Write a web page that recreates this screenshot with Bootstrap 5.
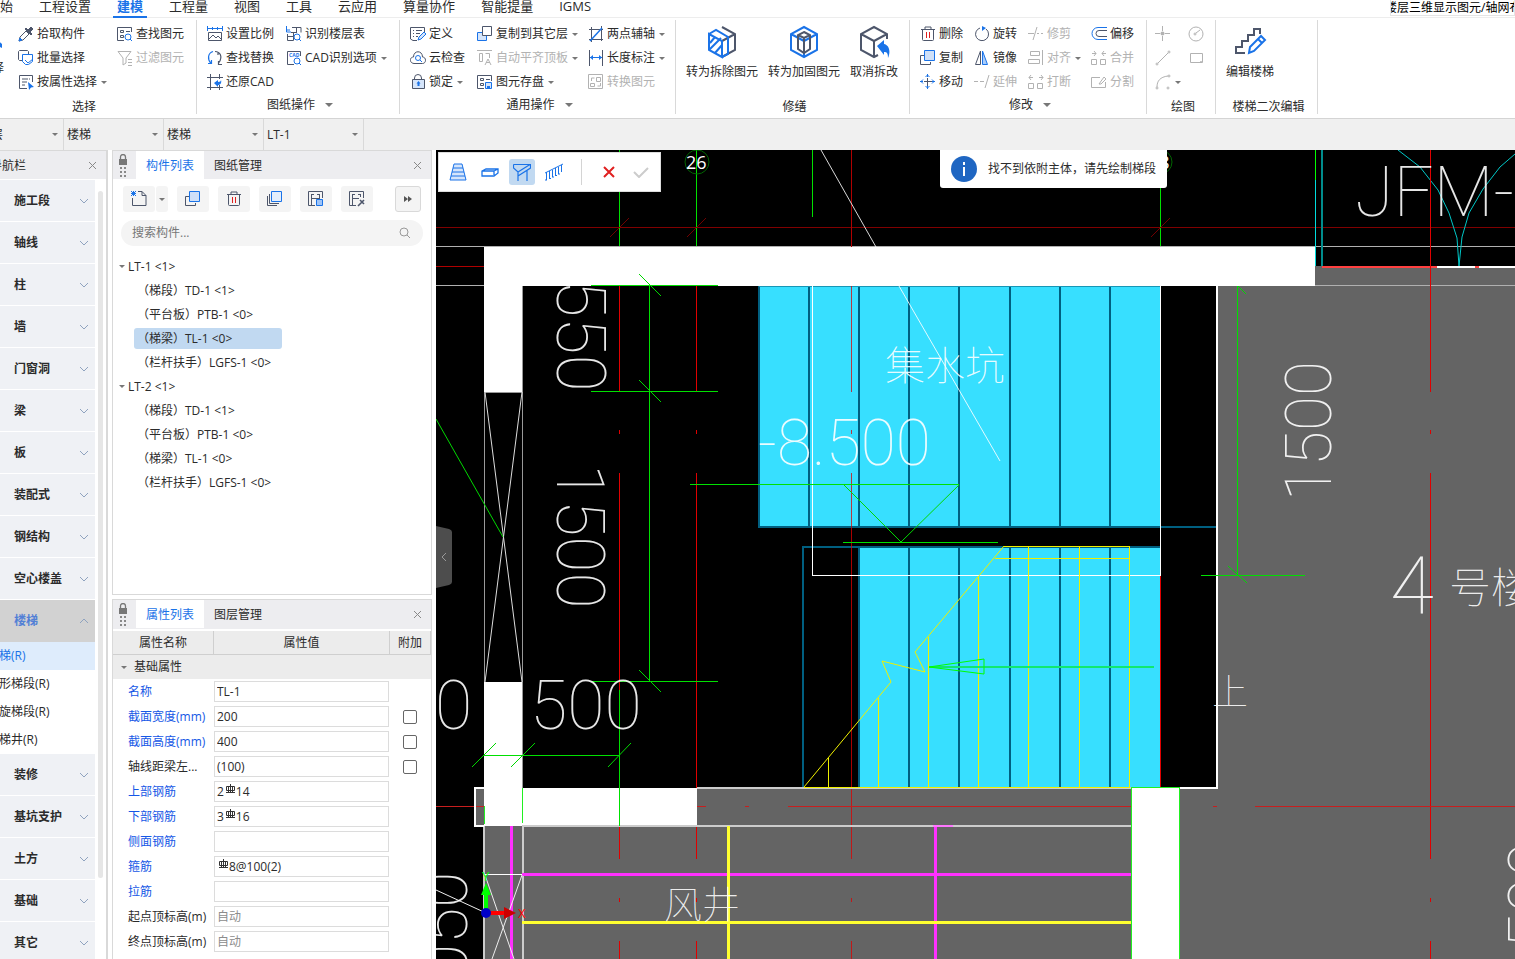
<!DOCTYPE html>
<html lang="zh-CN">
<head>
<meta charset="utf-8">
<meta name="viewport" content="width=device-width, initial-scale=1">
<title>楼梯建模</title>
<link href="https://cdn.jsdelivr.net/npm/bootstrap@5.3.0/dist/css/bootstrap.min.css" rel="stylesheet">
<style>
:root{--ink:#2b2b2b;--blue:#1a73e8;--slate:#4d566b;--mute:#b2b2b2;--rule:#d9d9d9;--bar:#f0f0f0}
body{font-family:"Open Sans","Noto Sans CJK SC",sans-serif;font-size:12px;line-height:16px;color:var(--ink);background:#fff}
button,select,input{font:inherit;color:inherit}
button{background:none;border:0;padding:0;white-space:nowrap}
a{color:inherit;text-decoration:none}
svg{flex:none;fill:none}
.menubar{height:18px;border-bottom:1px solid #ededed}
.menubar .nav-link{position:relative;font-size:13px;line-height:16px;height:18px;padding:0 4px;color:var(--ink);white-space:nowrap;margin-top:-2px}
.menubar .nav-link.active{color:var(--blue);font-weight:700;border-bottom:2px solid var(--blue);height:20px}
.menubar .tabs{gap:18px;margin-left:-17px}
.tipbox{width:125px;height:16px;border:1px solid #e4e4e4;border-top:0;color:#000;white-space:nowrap;overflow:hidden}
.tipbox span{margin-left:-6px;line-height:15px}
.ribbon{height:101px;border-bottom:1px solid #d4d4d4;padding-top:2px}
.rgroup{position:relative;border-right:1px solid var(--rule);height:94px;flex:none}
.rgroup .cols{height:75px;padding-top:2px;padding-left:10px}
.rgroup .title{height:20px;line-height:16px;display:flex;justify-content:center;align-items:center;gap:9px;padding-left:4px}
.rgroup .title.low{padding-top:3px}
.w-g1 .title{padding-right:32px}
.w-g1 .cols{padding-left:0}
.w-g6 .cols{padding-left:8px}
.rcol{display:flex;flex-direction:column;align-items:flex-start;flex:none}
.w-18c{width:99px;margin-left:14px}.w-79{width:79px}.w-67{width:67px}.w-111{width:111px}.w-54{width:54px}.w-63{width:63px}.w-33{width:33px}
.rbtn{height:24px;display:flex;align-items:center;gap:3px}
.rbtn.off{color:var(--mute)}
.caret{width:0;height:0;border:3px solid transparent;border-top-color:#777;border-bottom:0;flex:none;margin-left:1px}
.caret.big{border-width:4px;border-bottom:0}
.bigbtn{display:flex;flex-direction:column;align-items:center;gap:5px;padding-top:3px;line-height:16px}
.bigrow{gap:10px}
.pickbtn{width:24px;margin-left:-20px}
.w-g1{width:197px}.w-g2{width:203px}.w-g3{width:276px}.w-g4{width:234px}.w-g5{width:237px}.w-g6{width:69px}.w-g7{width:102px}
.combobar{background:var(--bar);overflow:hidden}
.combos{height:31px;margin-left:-36px}
.combo{position:relative;width:100px;border-right:1px solid var(--rule)}
.combo select{appearance:none;width:100%;height:31px;border:0;background:none;padding:0 0 0 3px;outline:0}
.combo .caret{position:absolute;right:5px;top:14px;pointer-events:none}
.side{width:108px;border-right:2px solid var(--rule);border-top:1px solid var(--rule);overflow:hidden}
.side nav{padding-top:1px}
.phead{height:28px;background:#ededf0;flex:none}
.side .phead{padding:1px 9px 0 0}
.side .phead span{margin-left:-10px}
.navrow{display:flex;width:95px;height:41px;margin-bottom:1px;background:#eff1f5;align-items:center;justify-content:space-between;padding:0 6px 0 14px;font-weight:700}
.navrow.active{background:#d2d2d2;color:#5380d6;margin-bottom:0;height:42px}
.subrow{display:block;width:95px;height:28px;line-height:28px;white-space:nowrap}
.subrow span{margin-left:-13px}
.subrow.active{background:#deecfc;color:var(--blue)}
.thumb{width:5px;height:687px;border-radius:3px;background:#e6e6e6;margin:12px 0 0 3px}
.panel{border:1px solid var(--rule);background:#fff}
.parts{flex:0 0 445px}
.dock{width:320px}
.grip{margin:3px 8px 0 5px}
.phead .shut{margin-left:auto;padding-right:9px}
.ptab{width:68px;height:28px;line-height:29px;text-align:center}
.ptab.active{background:#fff;color:var(--blue)}
.tools{gap:9px;padding:7px 10px 0}
.pair{gap:1px}
.tbtn{width:32px;height:26px;background:#f4f4f4;border-radius:3px;display:flex;align-items:center;justify-content:center}
.tbtn.slim{width:12px}
.tbtn.more{width:26px;border:1px solid var(--rule)}
.search{height:26px;border-radius:13px;background:#f4f4f4;padding:0 12px 0 11px}
.search input{border:0;background:none;outline:0;min-width:0}
.search input::placeholder{color:#777}
.tree{padding-top:2px}
.tree button{display:flex;align-items:center;height:21px;margin-bottom:3px}
.tree .root{gap:3px;margin-left:5px}
.tree .leaf{margin-left:21px;width:148px;padding-left:3px;border-radius:3px}
.tree .leaf.active{background:#c1d9f1}
.attrs .phead{margin-bottom:2px;height:29px}
.props{width:100%;table-layout:fixed;border-collapse:separate;border-spacing:0}
.c-name{width:101px}.c-val{width:176px}
.props th{height:24px;font-weight:400;text-align:center;background:#ececec;border-right:1px solid #cfcfcf;border-bottom:1px solid #cfcfcf;padding:0}
.props td{height:25px;padding:0}
.props .sect td{height:24px;background:#ececec;padding-left:8px}
.props .sect span{gap:7px}
.props label{padding-left:15px;white-space:nowrap}
.props .vary label{color:#1557e6}
.props .txt{display:block;width:100%;height:21px;border:1px solid #dcdcdc;padding:0 2px;outline:0;background:#fff}
.props .txt::placeholder{color:#8c8c8c}
.props input[type=checkbox]{appearance:none;width:14px;height:14px;border:1px solid #666;border-radius:2px;margin:0 0 0 13px;display:block}
.props .cell{position:relative;padding-right:1px}
.cell svg{position:absolute;top:5px}
.cell .r1{left:11px}.cell .r0{left:4px}
.canvas{position:relative;background:#000;overflow:hidden;min-width:0}
.canvas>svg{position:absolute;left:0;top:0}
.crisp{shape-rendering:crispEdges}
.cad{font-family:Roboto,"Noto Sans CJK SC",sans-serif;font-weight:100;fill:#fff;fill-opacity:.9}
.cjk{font-family:"Noto Sans CJK SC",sans-serif}
.float{position:absolute;left:2px;top:2px;background:#fff;border:1px solid #ddd;height:40px;width:223px;padding:0 6px}
.float button{width:26px;height:26px;margin-right:6px;border-radius:3px;display:flex;align-items:center;justify-content:center}
.float button.active{background:#c1d9f1}
.float hr{width:1px;height:26px;background:#d4d4d4;opacity:1;border:0;margin:0 14px 0 8px}
.notice{position:absolute;left:504px;top:0;height:38px;width:227px;background:#fff;border-radius:0 0 3px 3px;padding:0 11px;gap:11px;white-space:nowrap}
.handle{position:absolute;left:0;top:376px}
</style>
</head>
<body class="vh-100 d-flex flex-column overflow-hidden">

<svg width="0" height="0" class="position-absolute" aria-hidden="true">
<defs>
<symbol id="chev" viewBox="0 0 10 6"><path d="M1 1l4 4 4-4" stroke="#8fa3bf"/></symbol>
<symbol id="chevu" viewBox="0 0 10 6"><path d="M1 5l4-4 4 4" stroke="#8fa3bf"/></symbol>
<symbol id="close" viewBox="0 0 9 9"><path d="M1 1l7 7M8 1l-7 7" stroke="#888"/></symbol>
<symbol id="lock-s" viewBox="0 0 10 24"><path d="M2.500 5V3a2.500 2.500 0 0 1 5 0v2" stroke="#777" stroke-width="1.300"/><path d="M1 5h8v6H1z" fill="#777"/><path d="M2 13h2v2H2zM6 13h2v2H6zM2 17h2v2H2zM6 17h2v2H6zM2 21h2v2H2zM6 21h2v2H6z" fill="#888"/></symbol>
<symbol id="drop" viewBox="0 0 16 16"><path d="M1 15l1-4 6-6 3 3-6 6z" stroke="#4d566b"/><path d="M1 15l1-3 2 2z" fill="#1a73e8" stroke="#1a73e8"/><path d="M7 3l6 6 1-1-2-2 3-3-2-2-3 3-2-2z" fill="#4d566b" stroke="#4d566b"/></symbol>
<symbol id="batch" viewBox="0 0 16 16"><path d="M4 10.500H1.500l-1-1v-8l1-1h8l1 1V4" stroke="#4d566b"/><path d="M4.500 4.500h10v7l-4 3h-3l-3-3z" stroke="#1a73e8"/><path d="M7 10l3 3 5-4" stroke="#1a73e8"/></symbol>
<symbol id="attr" viewBox="0 0 16 16"><path d="M9 14.500H1.500v-13h13V8M4 5h6M4 8h5M4 11h3M11 5h1" stroke="#4d566b"/><path d="M10 8l6 5-3 .5L11 16z" fill="#1a73e8"/></symbol>
<symbol id="find" viewBox="0 0 16 16"><path d="M7 14.500H.5v-13h14V6M3.500 4.500h3v2h-3zM3.500 9.500h3v2h-3zM9 5.500h4" stroke="#4d566b"/><circle cx="11" cy="11" r="3" stroke="#1a73e8"/><path d="M13 13l2 2" stroke="#1a73e8"/></symbol>
<symbol id="filter" viewBox="0 0 16 16"><path d="M1 1.500h13L9 8v5l-3 2V8zM11 9.500h4M11 12.500h4M11 15.500h4" stroke="#b2b2b2"/></symbol>
<symbol id="scale" viewBox="0 0 16 16"><path d="M1 2.500h14M.5 0v5M15.500 0v5M5.500 1v3M10.500 1v3" stroke="#1a73e8"/><path d="M1.500 6.500h13v8h-13zM2 13l4-4 3 3 2-2 3 3" stroke="#4d566b"/></symbol>
<symbol id="swap" viewBox="0 0 16 16"><path d="M6 1.500C1 3 0 9 4 13.500M1 13.500h3.500V10" stroke="#1a73e8" stroke-width="1.200"/><path d="M8 1.500c5 0 8 5 4 11M15 14.500h-3.500V11M11 2v3" stroke="#4d566b" stroke-width="1.200"/></symbol>
<symbol id="restore" viewBox="0 0 16 16"><path d="M3.500 0v16M0 3.500h16M0 13.500h16M12.500 0v5M12.500 11v5" stroke="#4d566b"/><path d="M7 9l4-3v2c2 0 3-1 3-2 1 3-1 5-3 5v2z" fill="#1a73e8"/></symbol>
<symbol id="floor" viewBox="0 0 16 16"><path d="M.5 0v6H5M.5 4H4" stroke="#1a73e8"/><path d="M6 1.500h9v5M10.500 1v6M5 6.500h5M1.500 8v6.500h6V6M2 10.500h6" stroke="#4d566b"/><circle cx="11" cy="11" r="3" stroke="#1a73e8"/><path d="M13 13l2 2" stroke="#1a73e8"/></symbol>
<symbol id="cadopt" viewBox="0 0 16 16"><path d="M8 14.500H1.500v-13h13V6" stroke="#4d566b"/><text x="3" y="7" font-size="5" font-weight="700" fill="#1a73e8">CAD</text><circle cx="11" cy="11" r="3" stroke="#1a73e8"/><path d="M13 13l2 2" stroke="#1a73e8"/></symbol>
<symbol id="define" viewBox="0 0 16 16"><path d="M7 14.500H3L.5 13V1.500h14V6M3 4.500h1M6 4.500h6M3 7.500h1M6 7.500h4M3 10.500h1M6 10.500h2" stroke="#4d566b"/><path d="M8 14l1-3 5-5 2 2-5 5z" fill="#d5e5fb" stroke="#1a73e8"/></symbol>
<symbol id="cloud" viewBox="0 0 16 16"><path d="M4 13.500C-1 13-.5 7 3.500 7 3.500 0 12.500 0 12.500 7c4 0 4 6.500 0 6.500z" stroke="#4d566b"/><circle cx="8" cy="8" r="2.500" stroke="#1a73e8"/><path d="M10 10l2 2" stroke="#1a73e8"/></symbol>
<symbol id="lock" viewBox="0 0 16 16"><path d="M4.500 6V4a3.500 3.500 0 0 1 7 0v2" stroke="#4d566b"/><path d="M2.500 5.500h12v9h-12z" fill="#d5e5fb" stroke="#4d566b"/><path d="M8.500 7l2 2.500h-1V12h-2V9.500h-1z" fill="#1a73e8"/></symbol>
<symbol id="layers" viewBox="0 0 16 16"><path d="M.5 6.500h9v8h-9z" fill="#d5e5fb" stroke="#1a73e8"/><path d="M5.500 .5h9v9h-9z" fill="#fff" stroke="#4d566b"/></symbol>
<symbol id="align-top" viewBox="0 0 16 16"><path d="M0 .5h15M2.500 3.500h3v8h-3zM8.500 3.500h4V8M8 15l3-6 3 6M9 12.500h4" stroke="#b2b2b2"/></symbol>
<symbol id="store" viewBox="0 0 16 16"><path d="M7 14.500H.5v-13h14V7M3.500 4.500h3v2h-3zM3.500 9.500h3v2h-3zM9 5.500h4" stroke="#4d566b"/><path d="M8.500 8.500h6v6h-6z" fill="#d5e5fb" stroke="#1a73e8"/><path d="M10 12h3v3h-3z" fill="#1a73e8"/></symbol>
<symbol id="axis2" viewBox="0 0 16 16"><path d="M3.500 1v15M13.500 0v15M1 3.500h14M1 13.500h14" stroke="#4d566b"/><path d="M2 15L14 2" stroke="#1a73e8" stroke-width="1.500"/></symbol>
<symbol id="length" viewBox="0 0 16 16"><path d="M1.500 0v16M14.500 0v16" stroke="#4d566b"/><path d="M2 7.500h12" stroke="#1a73e8"/><path d="M2 7.500L5 5v5zM14 7.500L11 5v5z" fill="#1a73e8"/></symbol>
<symbol id="convert" viewBox="0 0 16 16"><path d="M.5 .5h14v14H.5zM8.500 3.500h4v4h-4zM2.500 9.500h4v3h-4zM3.500 7V4h3M12.500 9v3h-3" stroke="#b2b2b2"/></symbol>
<symbol id="cube1" viewBox="0 0 32 34"><path d="M16 2l13 7v16l-13 7M16 16l13-7" stroke="#4d566b" stroke-width="2"/><path d="M16 32L3 25V9l13 7zM3 9l7-4 12 7v17l-6 3M4 18l5-6M4 24l11-11M9 28l7-8" stroke="#1a73e8" stroke-width="2"/></symbol>
<symbol id="cube2" viewBox="0 0 32 34"><path d="M16 2l13 7v16l-13 7-13-7V9zM3 9l13 7 13-7M16 16v16" stroke="#1a73e8" stroke-width="2"/><path d="M16 7l6 3v14l-6 4-6-4V10zM10 10l6 3 6-3M16 13v15" stroke="#4d566b" stroke-width="2"/></symbol>
<symbol id="cube3" viewBox="0 0 32 34"><path d="M29 14V9L16 2 3 9v16l13 7 4-2M3 9l13 7 13-7M16 16v16" stroke="#4d566b" stroke-width="2"/><path d="M19 21l7-6v4c5 1 7 7 4 14 0-5-1-6-4-6v3z" fill="#1a73e8"/></symbol>
<symbol id="trash" viewBox="0 0 16 16"><path d="M1 3.500h14M5 3V1h6v2M2.500 4v9.500a1 1 0 0 0 1 1h9a1 1 0 0 0 1-1V4" stroke="#4d566b"/><path d="M6.500 6v6M9.500 6v6" stroke="#e02020"/></symbol>
<symbol id="copy" viewBox="0 0 16 16"><path d="M4 5.500H.5v9h10V12" stroke="#4d566b"/><path d="M4.500 .5h10v10h-10z" fill="#cfe0f8" stroke="#1a73e8"/></symbol>
<symbol id="move" viewBox="0 0 16 16"><path d="M7.500 4v8M4 7.500h8" stroke="#4d566b"/><path d="M7.500 0v3M7.500 12v3M0 7.500h3M12 7.500h3M5.500 3l2-2 2 2M5.500 12l2 2 2-2M3 5.500l-2 2 2 2M12 5.500l2 2-2 2" stroke="#1a73e8"/></symbol>
<symbol id="rotate" viewBox="0 0 16 16"><path d="M6 2a6.500 6.500 0 1 0 6 1" stroke="#4d566b"/><path d="M8 0l4 2-4 3z" fill="#1a73e8"/></symbol>
<symbol id="mirror" viewBox="0 0 16 16"><path d="M6.500 1v13.500H1.500z" stroke="#4d566b"/><path d="M8.500 1v13.500h5z" fill="#a9ccfa" stroke="#1a73e8"/></symbol>
<symbol id="extend" viewBox="0 0 16 16"><path d="M0 7.500h4M6 7.500h4M11 14l4-13" stroke="#b2b2b2"/></symbol>
<symbol id="trim" viewBox="0 0 16 16"><path d="M0 7.500h6M5 14l4-13M9 7.500h2M13 7.500h2" stroke="#b2b2b2"/></symbol>
<symbol id="alignr" viewBox="0 0 16 16"><path d="M2.500 1.500h9v4h-9zM.5 9.500h11v4H.5zM14.500 0v15" stroke="#b2b2b2"/></symbol>
<symbol id="brk" viewBox="0 0 16 16"><path d="M.5 9.500h5v5h-5zM9.500 9.500h5v5h-5zM1 3.500h4M3 1L1 3.500 3 6M15 3.500h-4M13 1l2 2.500L13 6" stroke="#b2b2b2"/></symbol>
<symbol id="offset" viewBox="0 0 16 16"><path d="M16 1.500H7a6 6 0 0 0 0 12h9" stroke="#1a73e8"/><path d="M16 4.500H8a3 3 0 0 0 0 6h8" stroke="#4d566b"/></symbol>
<symbol id="merge" viewBox="0 0 16 16"><path d="M.5 9.500h5v5h-5zM9.500 9.500h5v5h-5zM1 3.500h4M3 1l2 2.500L3 6M15 3.500h-4M13 1l-2 2.500L13 6" stroke="#b2b2b2"/></symbol>
<symbol id="split" viewBox="0 0 16 16"><path d="M9 3.500H.5v10h14V8M8 10l5-7 2 2-5 5z" stroke="#b2b2b2"/></symbol>
<symbol id="pt" viewBox="0 0 16 16"><path d="M7.500 0v5M7.500 10v5M0 7.500h5M10 7.500h5" stroke="#b2b2b2"/><circle cx="7.500" cy="7.500" r="2" fill="#b2b2b2"/></symbol>
<symbol id="circ" viewBox="0 0 16 16"><circle cx="8" cy="8" r="7" stroke="#b2b2b2"/><circle cx="7" cy="8" r="1" stroke="#b2b2b2"/><path d="M8 7l4-3" stroke="#b2b2b2"/></symbol>
<symbol id="seg" viewBox="0 0 16 16"><path d="M3 13L13 3" stroke="#b2b2b2"/><circle cx="2" cy="14" r="1" stroke="#b2b2b2"/><circle cx="14" cy="2" r="1" stroke="#b2b2b2"/></symbol>
<symbol id="rct" viewBox="0 0 16 16"><path d="M2.500 3.500h12v9h-12z" stroke="#b2b2b2"/><circle cx="13" cy="12" r="1" fill="#b2b2b2"/></symbol>
<symbol id="arc" viewBox="0 0 16 16"><path d="M2 13c0-6 3-10 11-11" stroke="#b2b2b2"/><circle cx="2" cy="14" r="1" stroke="#b2b2b2"/><circle cx="13" cy="14" r="1" stroke="#b2b2b2"/><circle cx="14" cy="2" r="1" stroke="#b2b2b2"/></symbol>
<symbol id="stair" viewBox="0 0 34 30"><path d="M12 27H3v-6h6v-6h6V9h6V3h6v5" stroke="#4d566b" stroke-width="2"/><path d="M16 27l1-6 11-11 4 4-11 11zM25 13l4 4" stroke="#1a73e8" stroke-width="2"/></symbol>
<symbol id="newc" viewBox="0 0 16 16"><path d="M7 .5h4l4 4v10H1.500V7M11 .5v4h4" stroke="#4d566b"/><path d="M0 0l5 5M5 0L0 5M2.500 0v5M0 2.500h5" stroke="#1a73e8"/></symbol>
<symbol id="stack" viewBox="0 0 16 16"><path d="M4.500 .5h10v10h-10z" fill="#e3eefc" stroke="#1a73e8"/><path d="M2.500 3v9.500H12M.5 5v9.500H10" stroke="#4d566b"/></symbol>
<symbol id="save-h" viewBox="0 0 16 16"><path d="M7 14.500H.5V.5h14V7M3.500 3v12M4 7.500h8M11.500 3v5M3.500 3.500H6M9 3.500h3" stroke="#4d566b"/><path d="M8.500 8.500h6v6h-6z" fill="#9fc4f7" stroke="#1a73e8"/></symbol>
<symbol id="pick-h" viewBox="0 0 16 16"><path d="M7 14.500H.5V.5h14V7M3.500 3v12M4 7.500h6M11.500 3v3M3.500 3.500H6M9 3.500h3" stroke="#4d566b"/><path d="M9 15l4-4M11 9l4 4M13 11l2-2" stroke="#4d566b" stroke-width="1.600"/></symbol>
<symbol id="mag" viewBox="0 0 12 12"><circle cx="5" cy="5" r="4" stroke="#999"/><path d="M8 8l3 3" stroke="#999"/></symbol>
<symbol id="rebar" viewBox="0 0 11 10"><path d="M5.500 0v9M1.500 6.500v-4h8v4h-8M3.500 3v6M7.500 3v6M1 8.500h9" stroke="#333"/></symbol>
</defs>
</svg>

<header>
  <nav class="menubar d-flex justify-content-between">
    <div class="tabs nav flex-nowrap">
      <a class="nav-link" href="#">开始</a><a class="nav-link" href="#">工程设置</a><a class="nav-link active" href="#">建模</a><a class="nav-link" href="#">工程量</a><a class="nav-link" href="#">视图</a><a class="nav-link" href="#">工具</a><a class="nav-link" href="#">云应用</a><a class="nav-link" href="#">算量协作</a><a class="nav-link" href="#">智能提量</a><a class="nav-link" href="#">IGMS</a>
    </div>
    <div class="tipbox"><span>楼层三维显示图元/轴网布置</span></div>
  </nav>

  <div class="ribbon d-flex">
    <section class="rgroup w-g1">
      <div class="cols d-flex">
        <button class="bigbtn pickbtn"><svg width="24" height="30" viewBox="0 0 24 30"><path d="M14 12l8 7v4l-8-4z" fill="#1a73e8"/></svg><span>选择</span></button>
        <div class="rcol w-18c">
          <button class="rbtn"><svg width="16" height="16"><use href="#drop"/></svg>拾取构件</button>
          <button class="rbtn"><svg width="16" height="16"><use href="#batch"/></svg>批量选择</button>
          <button class="rbtn"><svg width="16" height="16"><use href="#attr"/></svg>按属性选择<i class="caret"></i></button>
        </div>
        <div class="rcol">
          <button class="rbtn"><svg width="16" height="16"><use href="#find"/></svg>查找图元</button>
          <button class="rbtn off"><svg width="16" height="16"><use href="#filter"/></svg>过滤图元</button>
        </div>
      </div>
      <div class="title low">选择</div>
    </section>
    <section class="rgroup w-g2">
      <div class="cols d-flex">
        <div class="rcol w-79">
          <button class="rbtn"><svg width="16" height="16"><use href="#scale"/></svg>设置比例</button>
          <button class="rbtn"><svg width="16" height="16"><use href="#swap"/></svg>查找替换</button>
          <button class="rbtn"><svg width="16" height="16"><use href="#restore"/></svg>还原CAD</button>
        </div>
        <div class="rcol">
          <button class="rbtn"><svg width="16" height="16"><use href="#floor"/></svg>识别楼层表</button>
          <button class="rbtn"><svg width="16" height="16"><use href="#cadopt"/></svg>CAD识别选项<i class="caret"></i></button>
        </div>
      </div>
      <div class="title">图纸操作<i class="caret big"></i></div>
    </section>
    <section class="rgroup w-g3">
      <div class="cols d-flex">
        <div class="rcol w-67">
          <button class="rbtn"><svg width="16" height="16"><use href="#define"/></svg>定义</button>
          <button class="rbtn"><svg width="16" height="16"><use href="#cloud"/></svg>云检查</button>
          <button class="rbtn"><svg width="16" height="16"><use href="#lock"/></svg>锁定<i class="caret"></i></button>
        </div>
        <div class="rcol w-111">
          <button class="rbtn"><svg width="16" height="16"><use href="#layers"/></svg>复制到其它层<i class="caret"></i></button>
          <button class="rbtn off"><svg width="16" height="16"><use href="#align-top"/></svg>自动平齐顶板<i class="caret"></i></button>
          <button class="rbtn"><svg width="16" height="16"><use href="#store"/></svg>图元存盘<i class="caret"></i></button>
        </div>
        <div class="rcol">
          <button class="rbtn"><svg width="16" height="16"><use href="#axis2"/></svg>两点辅轴<i class="caret"></i></button>
          <button class="rbtn"><svg width="16" height="16"><use href="#length"/></svg>长度标注<i class="caret"></i></button>
          <button class="rbtn off"><svg width="16" height="16"><use href="#convert"/></svg>转换图元</button>
        </div>
      </div>
      <div class="title">通用操作<i class="caret big"></i></div>
    </section>
    <section class="rgroup w-g4">
      <div class="cols bigrow d-flex align-items-start">
        <button class="bigbtn"><svg width="32" height="34"><use href="#cube1"/></svg>转为拆除图元</button>
        <button class="bigbtn"><svg width="32" height="34"><use href="#cube2"/></svg>转为加固图元</button>
        <button class="bigbtn"><svg width="32" height="34"><use href="#cube3"/></svg>取消拆改</button>
      </div>
      <div class="title low">修缮</div>
    </section>
    <section class="rgroup w-g5">
      <div class="cols d-flex">
        <div class="rcol w-54">
          <button class="rbtn"><svg width="16" height="16"><use href="#trash"/></svg>删除</button>
          <button class="rbtn"><svg width="16" height="16"><use href="#copy"/></svg>复制</button>
          <button class="rbtn"><svg width="16" height="16"><use href="#move"/></svg>移动</button>
        </div>
        <div class="rcol w-54">
          <button class="rbtn"><svg width="16" height="16"><use href="#rotate"/></svg>旋转</button>
          <button class="rbtn"><svg width="16" height="16"><use href="#mirror"/></svg>镜像</button>
          <button class="rbtn off"><svg width="16" height="16"><use href="#extend"/></svg>延伸</button>
        </div>
        <div class="rcol w-63">
          <button class="rbtn off"><svg width="16" height="16"><use href="#trim"/></svg>修剪</button>
          <button class="rbtn off"><svg width="16" height="16"><use href="#alignr"/></svg>对齐<i class="caret"></i></button>
          <button class="rbtn off"><svg width="16" height="16"><use href="#brk"/></svg>打断</button>
        </div>
        <div class="rcol">
          <button class="rbtn"><svg width="16" height="16"><use href="#offset"/></svg>偏移</button>
          <button class="rbtn off"><svg width="16" height="16"><use href="#merge"/></svg>合并</button>
          <button class="rbtn off"><svg width="16" height="16"><use href="#split"/></svg>分割</button>
        </div>
      </div>
      <div class="title">修改<i class="caret big"></i></div>
    </section>
    <section class="rgroup w-g6">
      <div class="cols d-flex">
        <div class="rcol w-33">
          <button class="rbtn" aria-label="点"><svg width="16" height="16"><use href="#pt"/></svg></button>
          <button class="rbtn" aria-label="直线"><svg width="16" height="16"><use href="#seg"/></svg></button>
          <button class="rbtn off" aria-label="弧线"><svg width="16" height="16"><use href="#arc"/></svg><i class="caret"></i></button>
        </div>
        <div class="rcol">
          <button class="rbtn" aria-label="圆"><svg width="16" height="16"><use href="#circ"/></svg></button>
          <button class="rbtn" aria-label="矩形"><svg width="16" height="16"><use href="#rct"/></svg></button>
        </div>
      </div>
      <div class="title low">绘图</div>
    </section>
    <section class="rgroup w-g7">
      <div class="cols d-flex align-items-start">
        <button class="bigbtn"><svg width="34" height="34" viewBox="0 0 34 34"><use href="#stair" width="34" height="30" y="1"/></svg>编辑楼梯</button>
      </div>
      <div class="title low">楼梯二次编辑</div>
    </section>
  </div>

  <div class="combobar">
    <div class="combos d-flex">
      <div class="combo"><select aria-label="楼层"><option>基础层</option></select><i class="caret"></i></div>
      <div class="combo"><select aria-label="构件大类"><option>楼梯</option></select><i class="caret"></i></div>
      <div class="combo"><select aria-label="构件类型"><option>楼梯</option></select><i class="caret"></i></div>
      <div class="combo"><select aria-label="构件"><option>LT-1</option></select><i class="caret"></i></div>
    </div>
  </div>
</header>

<main class="d-flex flex-grow-1 overflow-hidden">
  <aside class="side flex-shrink-0">
    <div class="phead d-flex align-items-center justify-content-between"><span>导航栏</span><button aria-label="关闭" class="d-flex"><svg width="9" height="9"><use href="#close"/></svg></button></div>
    <div class="d-flex">
      <nav>
        <button class="navrow">施工段<svg width="10" height="6"><use href="#chev"/></svg></button>
        <button class="navrow">轴线<svg width="10" height="6"><use href="#chev"/></svg></button>
        <button class="navrow">柱<svg width="10" height="6"><use href="#chev"/></svg></button>
        <button class="navrow">墙<svg width="10" height="6"><use href="#chev"/></svg></button>
        <button class="navrow">门窗洞<svg width="10" height="6"><use href="#chev"/></svg></button>
        <button class="navrow">梁<svg width="10" height="6"><use href="#chev"/></svg></button>
        <button class="navrow">板<svg width="10" height="6"><use href="#chev"/></svg></button>
        <button class="navrow">装配式<svg width="10" height="6"><use href="#chev"/></svg></button>
        <button class="navrow">钢结构<svg width="10" height="6"><use href="#chev"/></svg></button>
        <button class="navrow">空心楼盖<svg width="10" height="6"><use href="#chev"/></svg></button>
        <button class="navrow active">楼梯<svg width="10" height="6"><use href="#chevu"/></svg></button>
        <a class="subrow active" href="#"><span>楼梯(R)</span></a>
        <a class="subrow" href="#"><span>矩形梯段(R)</span></a>
        <a class="subrow" href="#"><span>螺旋梯段(R)</span></a>
        <a class="subrow" href="#"><span>楼梯井(R)</span></a>
        <button class="navrow">装修<svg width="10" height="6"><use href="#chev"/></svg></button>
        <button class="navrow">基坑支护<svg width="10" height="6"><use href="#chev"/></svg></button>
        <button class="navrow">土方<svg width="10" height="6"><use href="#chev"/></svg></button>
        <button class="navrow">基础<svg width="10" height="6"><use href="#chev"/></svg></button>
        <button class="navrow">其它<svg width="10" height="6"><use href="#chev"/></svg></button>
      </nav>
      <div class="thumb"></div>
    </div>
  </aside>

  <div class="dock d-flex flex-column flex-shrink-0 ms-1 me-1">
    <section class="panel parts">
      <div class="phead d-flex">
        <svg width="10" height="24" class="grip"><use href="#lock-s"/></svg>
        <button class="ptab active">构件列表</button><button class="ptab">图纸管理</button>
        <button aria-label="关闭" class="shut d-flex align-items-center"><svg width="9" height="9"><use href="#close"/></svg></button>
      </div>
      <div class="tools d-flex">
        <div class="pair d-flex"><button class="tbtn" aria-label="新建"><svg width="16" height="16"><use href="#newc"/></svg></button><button class="tbtn slim" aria-label="更多新建"><i class="caret m-0"></i></button></div>
        <button class="tbtn" aria-label="复制"><svg width="16" height="16"><use href="#copy"/></svg></button>
        <button class="tbtn" aria-label="删除"><svg width="16" height="16"><use href="#trash"/></svg></button>
        <button class="tbtn" aria-label="层间复制"><svg width="16" height="16"><use href="#stack"/></svg></button>
        <button class="tbtn" aria-label="存盘"><svg width="16" height="16"><use href="#save-h"/></svg></button>
        <button class="tbtn" aria-label="提取"><svg width="16" height="16"><use href="#pick-h"/></svg></button>
        <button class="tbtn more ms-auto" aria-label="更多"><svg width="8" height="6" viewBox="0 0 8 6"><path d="M0 0l4 3-4 3zM4 0l4 3-4 3z" fill="#555"/></svg></button>
      </div>
      <div class="search d-flex align-items-center mx-2 my-2"><input class="flex-grow-1 p-0" type="search" aria-label="搜索构件" placeholder="搜索构件..."><svg width="12" height="12"><use href="#mag"/></svg></div>
      <div class="tree">
        <button class="root"><i class="caret"></i>LT-1 &lt;1&gt;</button>
        <button class="leaf">（梯段）TD-1 &lt;1&gt;</button>
        <button class="leaf">（平台板）PTB-1 &lt;0&gt;</button>
        <button class="leaf active">（梯梁）TL-1 &lt;0&gt;</button>
        <button class="leaf">（栏杆扶手）LGFS-1 &lt;0&gt;</button>
        <button class="root"><i class="caret"></i>LT-2 &lt;1&gt;</button>
        <button class="leaf">（梯段）TD-1 &lt;1&gt;</button>
        <button class="leaf">（平台板）PTB-1 &lt;0&gt;</button>
        <button class="leaf">（梯梁）TL-1 &lt;0&gt;</button>
        <button class="leaf">（栏杆扶手）LGFS-1 &lt;0&gt;</button>
      </div>
    </section>

    <section class="panel attrs flex-grow-1 mt-1 border-bottom-0 overflow-hidden">
      <div class="phead d-flex">
        <svg width="10" height="24" class="grip"><use href="#lock-s"/></svg>
        <button class="ptab active">属性列表</button><button class="ptab">图层管理</button>
        <button aria-label="关闭" class="shut d-flex align-items-center"><svg width="9" height="9"><use href="#close"/></svg></button>
      </div>
      <table class="props">
        <colgroup><col class="c-name"><col class="c-val"><col></colgroup>
        <thead><tr><th>属性名称</th><th>属性值</th><th>附加</th></tr></thead>
        <tbody>
          <tr class="sect"><td colspan="3"><span class="d-flex align-items-center"><i class="caret m-0"></i>基础属性</span></td></tr>
          <tr class="vary"><td><label for="p1">名称</label></td><td class="cell"><input class="txt" id="p1" value="TL-1"></td><td></td></tr>
          <tr class="vary"><td><label for="p2">截面宽度(mm)</label></td><td class="cell"><input class="txt" id="p2" value="200"></td><td><input type="checkbox" aria-label="附加截面宽度"></td></tr>
          <tr class="vary"><td><label for="p3">截面高度(mm)</label></td><td class="cell"><input class="txt" id="p3" value="400"></td><td><input type="checkbox" aria-label="附加截面高度"></td></tr>
          <tr><td><label for="p4">轴线距梁左...</label></td><td class="cell"><input class="txt" id="p4" value="(100)"></td><td><input type="checkbox" aria-label="附加轴线距梁左"></td></tr>
          <tr class="vary"><td><label for="p5">上部钢筋</label></td><td class="cell"><input class="txt" id="p5" value="2&#8195;14"><svg class="r1" width="11" height="10"><use href="#rebar"/></svg></td><td></td></tr>
          <tr class="vary"><td><label for="p6">下部钢筋</label></td><td class="cell"><input class="txt" id="p6" value="3&#8195;16"><svg class="r1" width="11" height="10"><use href="#rebar"/></svg></td><td></td></tr>
          <tr class="vary"><td><label for="p7">侧面钢筋</label></td><td class="cell"><input class="txt" id="p7"></td><td></td></tr>
          <tr class="vary"><td><label for="p8">箍筋</label></td><td class="cell"><input class="txt" id="p8" value="&#8195;8@100(2)"><svg class="r0" width="11" height="10"><use href="#rebar"/></svg></td><td></td></tr>
          <tr class="vary"><td><label for="p9">拉筋</label></td><td class="cell"><input class="txt" id="p9"></td><td></td></tr>
          <tr><td><label for="p10">起点顶标高(m)</label></td><td class="cell"><input class="txt" id="p10" placeholder="自动"></td><td></td></tr>
          <tr><td><label for="p11">终点顶标高(m)</label></td><td class="cell"><input class="txt" id="p11" placeholder="自动"></td><td></td></tr>
        </tbody>
      </table>
    </section>
  </div>

  <section class="canvas flex-grow-1">
    <svg width="1079" height="809" viewBox="436 150 1079 809" role="img" aria-label="楼梯平面图">
      <!-- slab and walls -->
      <g class="crisp">
        <path d="M1315 266h200v693H484V826h-9v-38h742V286h98z" fill="#646464"/>
        <path d="M436 227.500H1515" stroke="#800000"/>
        <path d="M619.500 150v97M696.500 150v97M812.500 150v67M1160.500 150v97" stroke="#00e000"/>
        <path d="M436 246.500h1079M436 285.500h48M1315 285.500h200" stroke="#b0b0b0"/>
        <path d="M436 266.500h48M851.500 150v97" stroke="#b00000"/>
        <path d="M1315.500 150v30" stroke="#0f0"/><path d="M1315.500 180v86" stroke="#0dd"/><path d="M1322 150v116" stroke="#008c8c" stroke-width="2"/>
        <path d="M1322 266.500h115" stroke="#ff4040" stroke-width="2"/><path d="M1437 266.500h78" stroke="#fff" stroke-width="2"/><path d="M1475 266.500h4" stroke="#f44" stroke-width="2"/>
        <path d="M484 247h831v39H522v106h-38zM484 682h38v106h175v38H484zM1132 788h47v171h-47z" fill="#fff"/>
        <path d="M484.500 392v290M522.500 286v502M484 392h39" stroke="#999"/>
      </g>
      <path d="M610 237l19-19M687 237l19-19M1151 237l19-19" stroke="#700000"/>
      <path d="M485 392l37 290M522 392L485 682" stroke="#ddd"/>
      <path d="M1398 150l22 17 18 23 11 23 8 25 2 28M1459 266l3-29 7-24 14-24 17-22 15-13" stroke="#00c8c8"/>
      <circle cx="697" cy="162" r="12" stroke="#060"/><circle cx="1160" cy="162" r="12" stroke="#060"/>
      <text x="686" y="169" font-size="18" fill="#fff">26</text><text x="1149" y="169" font-size="18" fill="#fff">28</text>

      <!-- stair flights -->
      <g class="crisp">
        <path d="M759 286h401v241H759zM859 547h301v240H859z" fill="#37dfff"/>
        <path d="M759 286v241h458M809 286v241M859 286v241M909 286v241M959 286v241M1010 286v241M1060 286v241M1110 286v241M803 788V547h357M859 547v241M909 547v241M959 547v241M1010 547v241M1060 547v241M1110 547v241" stroke="#005f80" stroke-width="2"/>
        <path d="M759 286h401" stroke="#1796b5"/>
      </g>

      <!-- axis grid -->
      <g class="crisp" stroke="#e00000">
        <path d="M619.500 286v106M619.500 430v4M619.500 473v217M619.500 826v33M619.500 898v4M619.500 941v18M696.500 286v106M696.500 430v4M696.500 473v315M696.500 826v33M696.500 898v4M696.500 941v18M1430.500 150v242M1430.500 430v4M1430.500 473v386M1430.500 898v4M1430.500 941v18M1160.500 575v213"/>
        <path d="M851.500 286v106M851.500 430v4M851.500 473v386M851.500 898v4M851.500 941v18" stroke-opacity=".75"/>
        <path d="M436 806.500h48M697 806.500h9M745 806.500h4M788 806.500h343M1213 806.500h4M1255 806.500h260" stroke="#c81e1e"/>
      </g>

      <!-- wall outlines and rebar strips -->
      <g class="crisp">
        <path d="M697 788h435M522 826h610M484 826v133M523 826v133" stroke="#ccc" stroke-width="2"/>
        <path d="M484 788h-9v38h9M1217 286v502h-38" stroke="#fff" stroke-width="2"/>
        <path d="M511 826v133M522 874.500h609M935.500 826v133" stroke="#ff30ff" stroke-width="3"/>
        <path d="M933 826h20" stroke="#f7f" stroke-width="2"/>
        <path d="M728.500 826v133M522 922.500h609" stroke="#ffff30" stroke-width="3"/>
        <path d="M1131.500 959V787.500h48V959M484.500 806v18M522.500 788v35" stroke="#20f020"/>
        <path d="M484 874.500h38" stroke="#fff"/>
      </g>
      <path d="M485 875l29 84M522 875l-30 84M436 890l50 23" stroke="#eee"/>

      <!-- pit outline -->
      <path class="crisp" d="M812.500 286v289.500h348V286" stroke="#fff"/>
      <path d="M821 150l55 97M899 286l101 175" stroke="#fff" stroke-opacity=".85"/>

      <!-- dimension lines -->
      <g class="crisp" stroke="#00e000">
        <path d="M649.500 286v396M591 285.500h127M591 391.500h127M591 681.500h127M484 755.500h136M619.500 690v136M690 484.500h269M843 542.500h155M1237.500 286v290M1201 575.500h104"/>
      </g>
      <path d="M639 380l22 22M639 670l22 22M639 274l22 22M472 767l24-24M511 767l24-24M608 767l23-24M436 419l67 118M844 485l57 57 58-57M1228 566l19 17M1238 286l8 8" stroke="#00d800"/>

      <!-- flight break line -->
      <g stroke="#f0f000">
        <path d="M804 787l87-105-9-21 43 11-10-20 89-106"/>
        <path class="crisp" d="M1004 546.500h125.500V787.500H804M995 558.500h134M828.500 758v29M878.500 698v89M928.500 637v150M978.500 577v210M1028.500 547v240M1079.500 547v240"/>
      </g>
      <path class="crisp" d="M929 667h225" stroke="#10e870" stroke-width="2"/><path d="M929 667l55-8v15z" stroke="#0f0"/>

      <!-- annotations -->
      <g class="cad">
        <text x="1355" y="216" font-size="70">JFM-</text>
        <text x="758" y="465" font-size="64">-8.500</text>
        <text x="885" y="380" font-size="40" class="cjk">集水坑</text>
        <text transform="translate(557 280) rotate(90)" font-size="68">550</text>
        <text transform="translate(557 464) rotate(90)" font-size="66">1500</text>
        <text x="530" y="729" font-size="68">500</text>
        <text x="435" y="729" font-size="68">0</text>
        <text transform="translate(1331 501) rotate(-90)" font-size="64">1500</text>
        <text transform="translate(467 980) rotate(-90)" font-size="66">050</text>
        <text transform="translate(1556 950) rotate(-90)" font-size="66">500</text>
        <text x="1390" y="613" font-size="80">4</text>
        <text x="1449" y="603" font-size="42" class="cjk">号楼</text>
        <text x="1212" y="705" font-size="36" class="cjk">上</text>
        <text x="664" y="918" font-size="38" class="cjk">风井</text>
      </g>

      <!-- origin marker -->
      <path d="M486 913v-18" stroke="#0f0" stroke-width="4"/><path d="M481 895l5-12 5 12z" fill="#0f0"/>
      <path d="M490 913h15" stroke="#f00" stroke-width="4"/><path d="M504 907l12 6-12 6z" fill="#c00"/>
      <circle cx="486" cy="913" r="5" fill="#0000c8"/>
      <text x="482" y="881" font-size="13" fill="#0f0">Y</text><text x="518" y="918" font-size="13" fill="#f00">X</text>
    </svg>

    <div class="float d-flex align-items-center">
      <button aria-label="梯段"><svg width="18" height="18" viewBox="0 0 18 18"><path d="M5 1h8l4 16H1zM4 5h10M3 9h12M2 13h14" stroke="#1a73e8" fill="#d5e5fb"/></svg></button>
      <button aria-label="平台板"><svg width="18" height="18" viewBox="0 0 18 18"><path d="M1 8l4-2h12v4l-4 3H1zM1 8h12v4M13 8l4-2" stroke="#1a73e8" stroke-width="1.300"/></svg></button>
      <button class="active" aria-label="梯梁"><svg width="18" height="18" viewBox="0 0 18 18"><path d="M.5 1.500h17V5L5 13M.5 1.500V5L5 9 17 1.500M5 9v9M14 7v11" stroke="#1a73e8" stroke-width="1.200"/></svg></button>
      <button aria-label="栏杆扶手"><svg width="18" height="18" viewBox="0 0 18 18"><path d="M0 10L18 1M1.500 9v8M4.500 8v8M7.500 7v7M10.500 5v8M13.500 4v7M16.500 2v7M0 17h2M4 15.500h2M7 14h2M10 12.500h2M13 11h2" stroke="#1a73e8"/></svg></button>
      <hr>
      <button aria-label="取消"><svg width="12" height="12" viewBox="0 0 12 12"><path d="M1 1l10 10M11 1L1 11" stroke="#e02020" stroke-width="2"/></svg></button>
      <button aria-label="确定" class="me-0"><svg width="16" height="11" viewBox="0 0 16 11"><path d="M1 5l5 5 9-9" stroke="#ccc" stroke-width="2"/></svg></button>
    </div>

    <div class="notice d-flex align-items-center" role="status">
      <svg width="26" height="26" viewBox="0 0 26 26"><circle cx="13" cy="13" r="13" fill="#1f66c2"/><path d="M12 6h2v3h-2zM12 11h2v9h-2z" fill="#fff"/></svg>
      找不到依附主体，请先绘制梯段
    </div>

    <button class="handle" aria-label="收起"><svg width="16" height="62" viewBox="0 0 16 62"><path d="M0 0l13 3q3 1 3 3v50q0 2-3 3L0 62z" fill="#4d4d4d"/><path d="M10 27l-4 4 4 4" stroke="#999"/></svg></button>
  </section>
</main>
<script src="https://cdn.jsdelivr.net/npm/bootstrap@5.3.0/dist/js/bootstrap.bundle.min.js"></script>
</body>
</html>
